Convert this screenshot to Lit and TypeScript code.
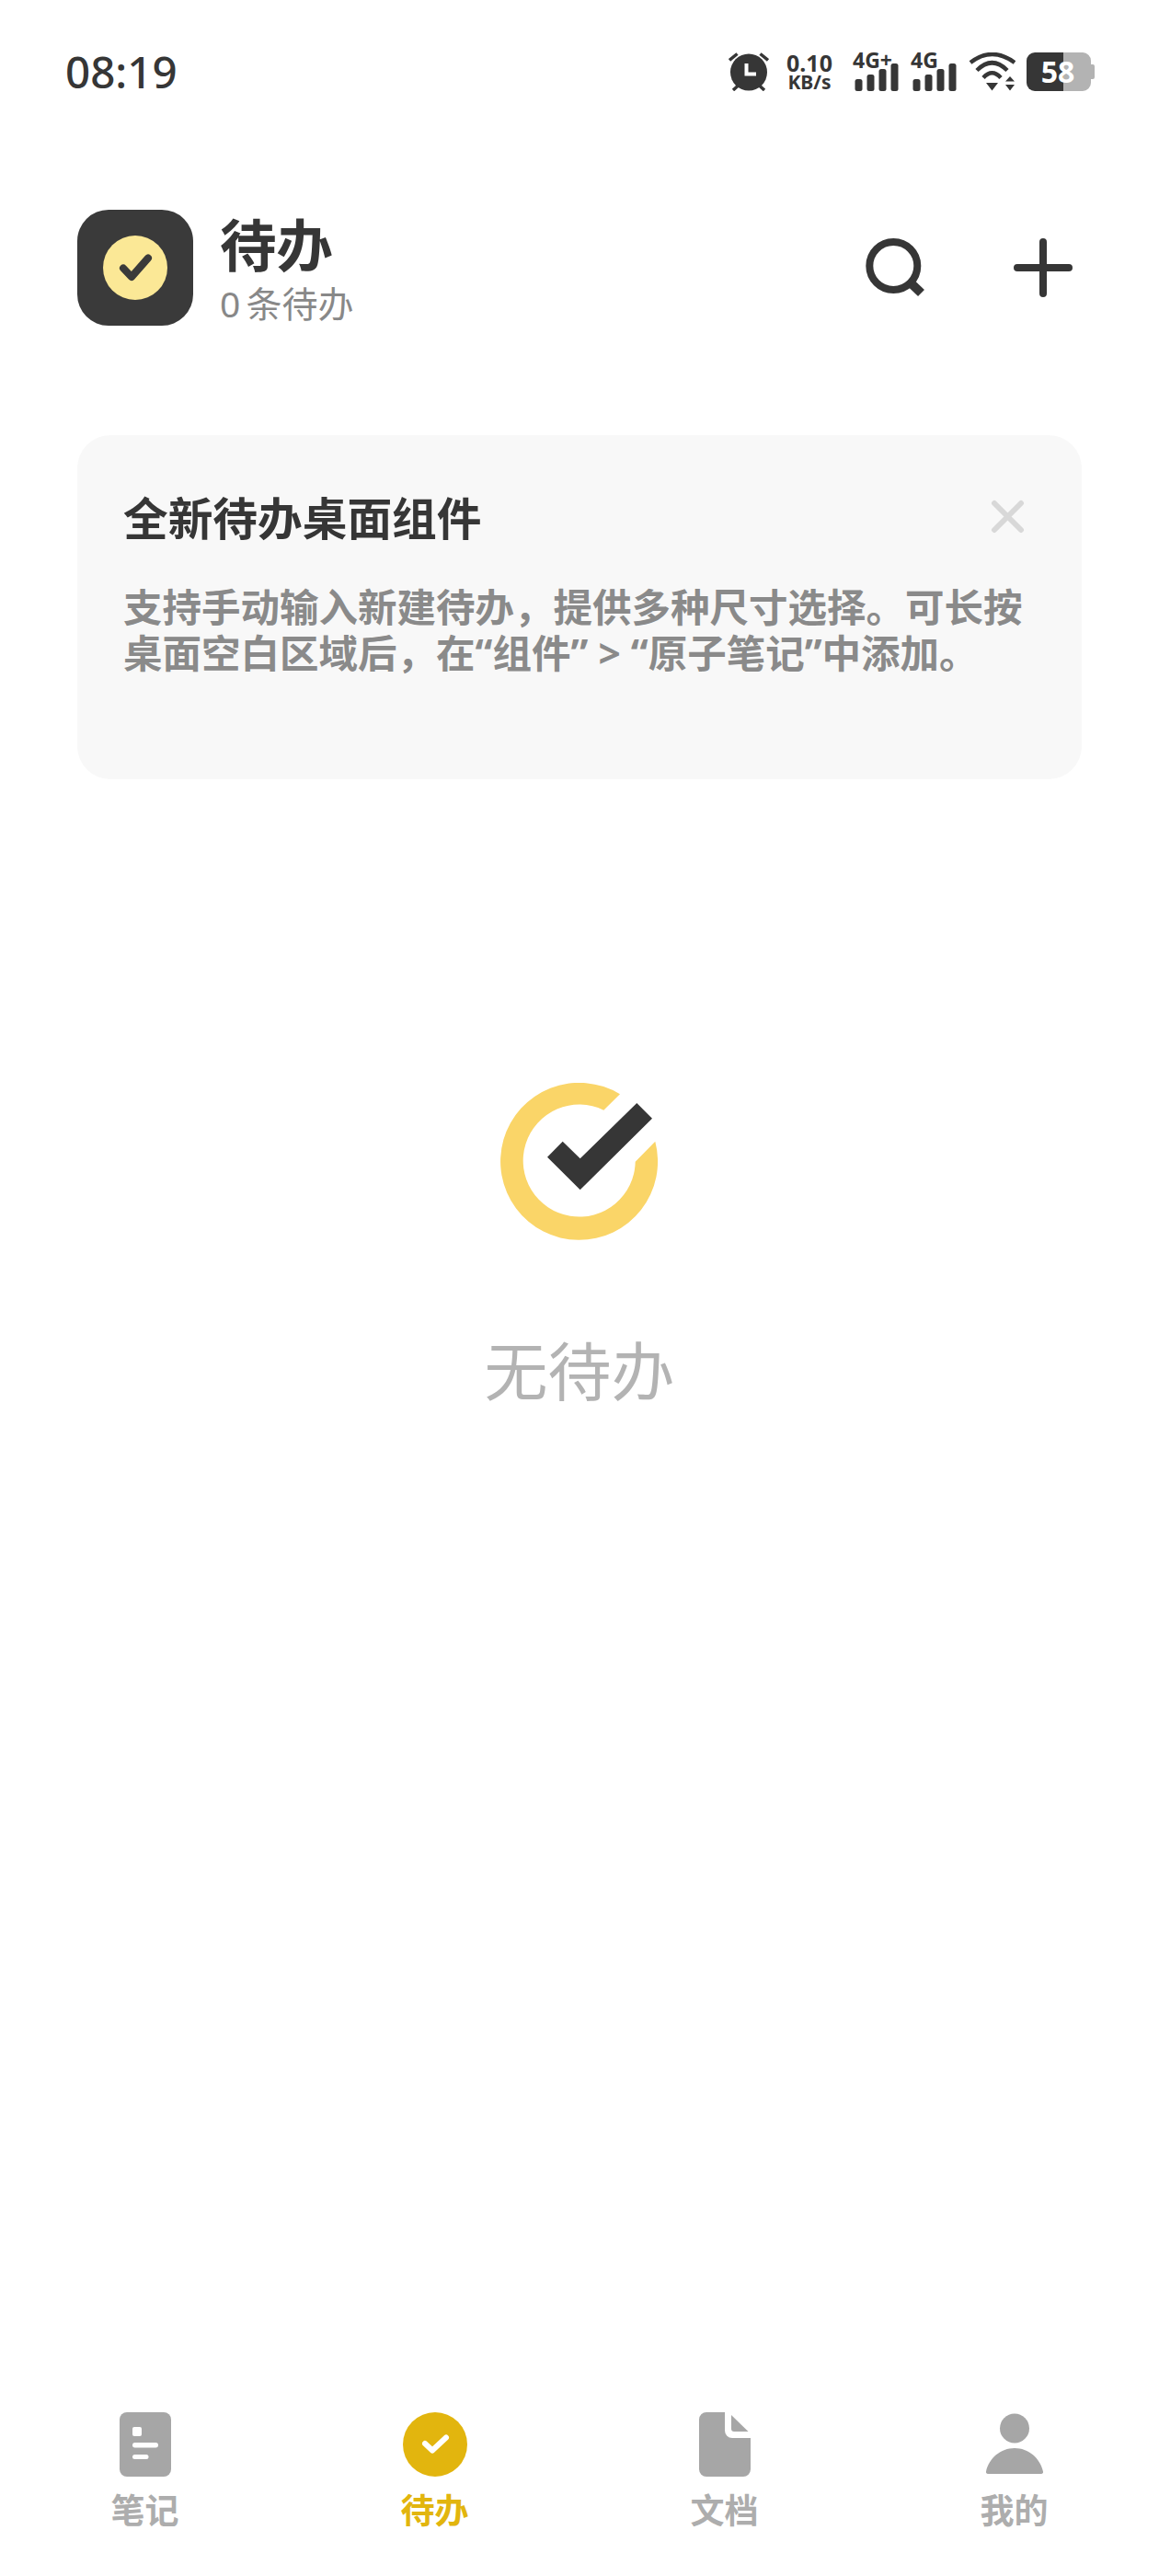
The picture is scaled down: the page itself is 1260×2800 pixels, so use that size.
import { LitElement, html, css, svg } from 'lit';
import { customElement } from 'lit/decorators.js';

const NAV_ICONS = {
  notes: svg`
    <rect x="7" width="56" height="70" rx="8" fill="#a6a6a6"></rect>
    <rect x="21" y="16" width="10" height="10" rx="2" fill="#fff"></rect>
    <rect x="21" y="33" width="28" height="5.5" rx="2.7" fill="#fff"></rect>
    <rect x="21" y="46" width="17.5" height="5" rx="2.5" fill="#fff"></rect>
  `,
  todo: svg`
    <circle cx="35" cy="35" r="35" fill="#e2b50e"></circle>
    <path d="M24 34l8 7.5 15-14" fill="none" stroke="#fff" stroke-width="6" stroke-linecap="round" stroke-linejoin="round"></path>
  `,
  docs: svg`
    <path d="M15 0h20v20a8 8 0 0 0 8 8h20v34a8 8 0 0 1-8 8H15a8 8 0 0 1-8-8V8a8 8 0 0 1 8-8z" fill="#a6a6a6"></path>
    <path d="M42 3l18.500 18H45a3 3 0 0 1-3-3z" fill="#a6a6a6"></path>
  `,
  me: svg`
    <circle cx="35" cy="17.500" r="16" fill="#a6a6a6"></circle>
    <path d="M6 67a2 2 0 0 1-2-2.500C7 50 20 39 35 39s28 11 31 25.500a2 2 0 0 1-2 2.500z" fill="#a6a6a6"></path>
  `,
};

const NAV_ITEMS = [
  { label: '笔记', icon: NAV_ICONS.notes, active: false },
  { label: '待办', icon: NAV_ICONS.todo, active: true },
  { label: '文档', icon: NAV_ICONS.docs, active: false },
  { label: '我的', icon: NAV_ICONS.me, active: false },
];

@customElement('app-root')
export class AppRoot extends LitElement {
  static styles = css`
    :host {
      display: flex;
      flex-direction: column;
      min-height: 2800px;
      background: #fff;
      color: #363636;
      font-family: 'Noto Sans', 'Noto Sans CJK SC', sans-serif;
    }

    svg {
      display: block;
      flex: none;
    }

    .status {
      display: flex;
      align-items: center;
      justify-content: space-between;
      height: 42px;
      margin-top: 57px;
      padding: 0 70px 0 71px;
    }

    .time {
      font-size: 47.5px;
      font-weight: 550;
      line-height: 42px;
    }

    .status-icons {
      display: flex;
      align-items: center;
    }

    .speed {
      display: flex;
      flex-direction: column;
      align-items: center;
      width: 50px;
      margin: 0 22px 0 19px;
      font-weight: 700;
    }

    .speed-value {
      font-size: 25px;
      line-height: 23px;
    }

    .speed-unit {
      font-size: 21px;
      line-height: 19px;
    }

    .signal {
      display: grid;
      width: 50px;
      height: 42px;
      margin-right: 13px;
    }

    .signal > * {
      grid-area: 1 / 1;
    }

    .signal-label {
      font-size: 23px;
      font-weight: 700;
      line-height: 16px;
      white-space: nowrap;
    }

    .signal svg {
      align-self: end;
    }

    .wifi {
      margin-right: 12px;
    }

    .battery {
      display: grid;
      width: 74px;
      height: 42px;
    }

    .battery > * {
      grid-area: 1 / 1;
    }

    .battery-level {
      justify-self: start;
      width: 68px;
      color: #fff;
      font-size: 32px;
      font-weight: 700;
      line-height: 42px;
      text-align: center;
    }

    .header {
      display: flex;
      align-items: center;
      height: 126px;
      margin-top: 129px;
      padding: 0 92px 0 84px;
    }

    .tile {
      display: flex;
      align-items: center;
      justify-content: center;
      width: 126px;
      height: 126px;
      border-radius: 34px;
      background: #3a3a3a;
    }

    .heading {
      flex: 1;
      margin-left: 29px;
    }

    .title {
      font-size: 61.5px;
      font-weight: 700;
      line-height: 72px;
    }

    .subtitle {
      margin-top: 6px;
      color: #888;
      font-size: 39px;
      line-height: 44px;
      word-spacing: -4px;
    }

    .actions {
      display: flex;
      gap: 94px;
    }

    .card {
      box-sizing: border-box;
      height: 374px;
      margin: 119px 84px 0;
      padding: 59px 62px 0 50px;
      border-radius: 36px;
      background: #f8f8f8;
    }

    .card-top {
      display: flex;
      align-items: center;
      justify-content: space-between;
      height: 62px;
    }

    .card-close {
      margin-top: -4px;
    }

    .card-title {
      font-size: 48.7px;
      font-weight: 700;
      line-height: 62px;
      white-space: nowrap;
    }

    .card-body {
      margin-top: 41px;
      color: #8a8a8a;
      font-size: 42.5px;
      font-weight: 700;
      line-height: 50px;
      white-space: nowrap;
    }

    .empty {
      display: flex;
      flex-direction: column;
      align-items: center;
      margin-top: 330px;
    }

    .empty-text {
      margin-top: 101px;
      color: #b3b3b3;
      font-size: 69px;
      line-height: 80px;
    }

    .nav {
      display: grid;
      grid-template-columns: repeat(4, 315px);
      margin-top: auto;
      padding-bottom: 49px;
    }

    .nav-item {
      display: flex;
      flex-direction: column;
      align-items: center;
      gap: 15px;
      color: #adadad;
      font-size: 37px;
      font-weight: 700;
      line-height: 44px;
    }

    .nav-item--active {
      color: #e2b50e;
    }
  `;

  private signalBars() {
    return html`
      <svg width="50" height="30" viewBox="0 0 50 30" fill="#363636">
        <rect x="2.500" y="17" width="8" height="13" rx="2.500"></rect>
        <rect x="15.500" y="12" width="8" height="18" rx="2.500"></rect>
        <rect x="28.500" y="6" width="8" height="24" rx="2.500"></rect>
        <rect x="41.500" y="0" width="8" height="30" rx="2.500"></rect>
      </svg>
    `;
  }

  render() {
    return html`
      <div class="status">
        <div class="time">08:19</div>
        <div class="status-icons">
          <svg width="44" height="42" viewBox="0 0 44 42" fill="none" stroke="#363636" stroke-width="4">
            <circle cx="22" cy="21.500" r="20" fill="#363636" stroke="none"></circle>
            <path d="M19.500 12v11.500H30" stroke="#fff" stroke-width="4"></path>
            <path d="M1 8.500L9.500 1.500M43 8.500L34.500 1.500M5 41l5.500-5M39 41l-5.500-5" stroke-width="3.500"></path>
          </svg>
          <div class="speed">
            <span class="speed-value">0.10</span>
            <span class="speed-unit">KB/s</span>
          </div>
          <div class="signal">
            <span class="signal-label">4G+</span>
            ${this.signalBars()}
          </div>
          <div class="signal">
            <span class="signal-label">4G</span>
            ${this.signalBars()}
          </div>
          <svg class="wifi" width="51" height="42" viewBox="0 0 51 42" fill="none" stroke="#363636" stroke-width="4.500">
            <path d="M2 11Q25.500-7 50 11M9 19.500Q25.500 3 42 19.500M16 27.500Q25.500 17 35 27.500"></path>
            <path d="M19 33h13l-6.500 8.500zM45 26l5 5.500H40zM40 35h10l-5 6.500z" fill="#363636" stroke="none"></path>
          </svg>
          <div class="battery">
            <svg width="74" height="42" viewBox="0 0 74 42">
              <path d="M40 0v42H9a9 9 0 0 1-9-9V9a9 9 0 0 1 9-9z" fill="#363636"></path>
              <path d="M40 0h21a9 9 0 0 1 9 9v4h2a2 2 0 0 1 2 2v12a2 2 0 0 1-2 2h-2v4a9 9 0 0 1-9 9H40z" fill="#b3b3b3"></path>
            </svg>
            <span class="battery-level">58</span>
          </div>
        </div>
      </div>

      <div class="header">
        <div class="tile">
          <svg width="70" height="70" viewBox="0 0 70 70">
            <circle cx="35" cy="35" r="35" fill="#fbe896"></circle>
            <path d="M22 35.500l9 9.500 18-20.500" fill="none" stroke="#3a3a3a" stroke-width="8" stroke-linecap="round" stroke-linejoin="round"></path>
          </svg>
        </div>
        <div class="heading">
          <div class="title">待办</div>
          <div class="subtitle">0 条待办</div>
        </div>
        <div class="actions">
          <svg width="66" height="64" viewBox="0 0 66 64" fill="none" stroke="#363636">
            <circle cx="31.300" cy="30" r="26" stroke-width="8"></circle>
            <path d="M51 49.500l10.500 10" stroke-width="10"></path>
          </svg>
          <svg width="68" height="64" viewBox="0 0 68 64" fill="none" stroke="#363636" stroke-width="8" stroke-linecap="round">
            <path d="M34 4v56M6 32h56"></path>
          </svg>
        </div>
      </div>

      <div class="card">
        <div class="card-top">
          <div class="card-title">全新待办桌面组件</div>
          <svg class="card-close" width="37" height="37" viewBox="0 0 37 37" fill="none" stroke="#d8d8d8" stroke-width="6" stroke-linecap="round">
            <path d="M4 4l29 29M33 4L4 33"></path>
          </svg>
        </div>
        <div class="card-body">
          支持手动输入新建待办，提供多种尺寸选择。可长按<br />桌面空白区域后，在“组件” > “原子笔记”中添加。
        </div>
      </div>

      <div class="empty">
        <svg width="172" height="172" viewBox="545 1177 172 172">
          <path
            d="M675 1189.300A85.500 85.500 0 1 0 713.300 1240.700L691.700 1262.700A61 61 0 1 1 657.300 1206.700Z"
            fill="#fad568"
          ></path>
          <path
            d="M693.300 1199L710 1215.700 631.700 1293.300 596 1257.700 612.700 1240.700 631.700 1259.300Z"
            fill="#363636"
          ></path>
        </svg>
        <div class="empty-text">无待办</div>
      </div>

      <div class="nav">
        ${NAV_ITEMS.map(
          (item) => html`
            <div class="nav-item ${item.active ? 'nav-item--active' : ''}">
              <svg width="70" height="70" viewBox="0 0 70 70">${item.icon}</svg>
              <span>${item.label}</span>
            </div>
          `,
        )}
      </div>
    `;
  }
}

declare global {
  interface HTMLElementTagNameMap {
    'app-root': AppRoot;
  }
}
